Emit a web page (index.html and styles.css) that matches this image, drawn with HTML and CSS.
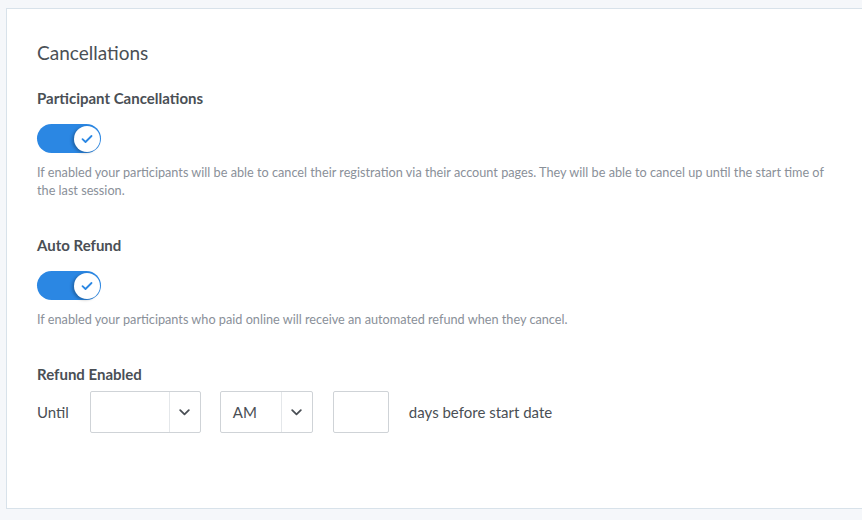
FILE: index.html
```html
<!DOCTYPE html>
<html>
<head>
<meta charset="utf-8">
<link rel="stylesheet" href="styles.css">
</head>
<body>
<div class="card">
  <h2 class="title">Cancellations</h2>

  <div class="field">
    <div class="label">Participant Cancellations</div>
    <div class="toggle">
      <div class="knob">
        <svg width="12" height="10" viewBox="0 0 12 10"><path d="M1.5 5.2 L4.5 8 L10.5 2" fill="none" stroke="#2b87e3" stroke-width="1.8" stroke-linecap="round" stroke-linejoin="round"/></svg>
      </div>
    </div>
    <p class="desc">If enabled your participants will be able to cancel their registration via their account pages. They will be able to cancel up until the start time of the last session.</p>
  </div>

  <div class="field">
    <div class="label">Auto Refund</div>
    <div class="toggle">
      <div class="knob">
        <svg width="12" height="10" viewBox="0 0 12 10"><path d="M1.5 5.2 L4.5 8 L10.5 2" fill="none" stroke="#2b87e3" stroke-width="1.8" stroke-linecap="round" stroke-linejoin="round"/></svg>
      </div>
    </div>
    <p class="desc">If enabled your participants who paid online will receive an automated refund when they cancel.</p>
  </div>

  <div class="field">
    <div class="label">Refund Enabled</div>
    <div class="row">
      <span class="row-text">Until</span>
      <div class="select select-day">
        <span class="select-value"></span>
        <span class="select-arrow"><svg width="11" height="7" viewBox="0 0 11 7"><path d="M1.2 1.2 L5.5 5.3 L9.8 1.2" fill="none" stroke="#4a4f55" stroke-width="1.8" stroke-linecap="round" stroke-linejoin="round"/></svg></span>
      </div>
      <div class="select select-ampm">
        <span class="select-value">AM</span>
        <span class="select-arrow"><svg width="11" height="7" viewBox="0 0 11 7"><path d="M1.2 1.2 L5.5 5.3 L9.8 1.2" fill="none" stroke="#4a4f55" stroke-width="1.8" stroke-linecap="round" stroke-linejoin="round"/></svg></span>
      </div>
      <div class="input"></div>
      <span class="row-text">days before start date</span>
    </div>
  </div>
</div>
</body>
</html>
```
FILE: styles.css
```css
html, body {
  margin: 0;
  padding: 0;
  background: #f5f7fa;
  font-family: Lato, "Open Sans", sans-serif;
  color: #4a4f55;
}
body {
  padding: 8px 0 0 6px;
  overflow: hidden;
  height: 520px;
  box-sizing: border-box;
}
.card {
  width: 880px;
  height: 501px;
  box-sizing: border-box;
  background: #ffffff;
  border: 1px solid #d8e2ea;
  padding: 31px 40px 0 30px;
}
.title {
  margin: 0;
  font-size: 19px;
  line-height: 26px;
  font-weight: 400;
  color: #4a4f55;
}
.field {
  margin-top: 22px;
}
.field + .field {
  margin-top: 36px;
}
.label {
  font-size: 15px;
  line-height: 20px;
  font-weight: 700;
  color: #4a4f55;
}
.toggle {
  margin-top: 16px;
  width: 64px;
  height: 29px;
  border-radius: 15px;
  background: #2b87e3;
  position: relative;
}
.knob {
  position: absolute;
  right: 1px;
  top: 1.5px;
  width: 26px;
  height: 26px;
  border-radius: 50%;
  background: #ffffff;
  box-shadow: -2px 1px 3px rgba(0, 0, 0, 0.25);
  display: flex;
  align-items: center;
  justify-content: center;
}
.desc {
  margin: 10px 0 0;
  font-size: 12.7px;
  line-height: 18px;
  color: #8a9099;
  max-width: 806px;
}
.row {
  margin-top: 7px;
  display: flex;
  align-items: center;
  gap: 20px;
}
.row-text {
  font-size: 15px;
  color: #4a4f55;
}
.select {
  height: 42px;
  box-sizing: border-box;
  border: 1px solid #cfd3d7;
  border-radius: 2px;
  display: flex;
  align-items: stretch;
}
.select-day { width: 111px; margin-left: 1px; }
.select-ampm { width: 93px; margin-left: -1px; }
.select-value {
  flex: 1;
  display: flex;
  align-items: center;
  padding-left: 12px;
  font-size: 15px;
  color: #4a4f55;
}
.select-arrow {
  width: 30px;
  border-left: 1px solid #e4e7ea;
  display: flex;
  align-items: center;
  justify-content: center;
}
.input {
  width: 56px;
  height: 42px;
  box-sizing: border-box;
  border: 1px solid #cfd3d7;
  border-radius: 2px;
}
```
